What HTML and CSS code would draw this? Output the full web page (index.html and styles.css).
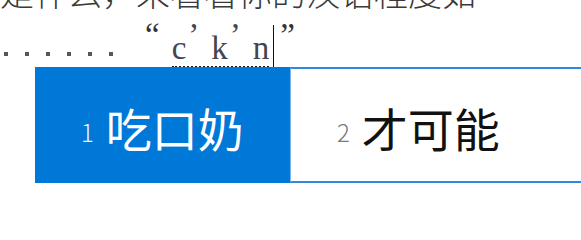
FILE: index.html
```html
<!DOCTYPE html>
<html lang="zh-CN">
<head>
<meta charset="utf-8">
<title>IME</title>
<link rel="stylesheet" href="styles.css">
</head>
<body>
<div class="line1">是什么，来看看你的汉语程度如</div>
<div class="line2"><span class="dots"><i></i><i></i><i></i><i></i><i></i><i></i></span><span class="q lq">“</span><span class="comp">c<span class="ap">’</span>k<span class="ap">’</span>n</span><span class="caret"></span><span class="q rq">”</span></div>
<div class="cands">
  <div class="cand sel"><span class="num">1</span><span class="word">吃口奶</span></div>
  <div class="cand"><span class="num">2</span><span class="word">才可能</span></div>
</div>
</body>
</html>
```
FILE: styles.css
```css
html, body {
  margin: 0;
  padding: 0;
  background: #ffffff;
  overflow: hidden;
}

.line1 {
  margin-top: -25px;
  height: 38px;
  font-family: "Noto Sans CJK SC", sans-serif;
  font-size: 34px;
  line-height: 34px;
  font-weight: 300;
  color: #3a3a3a;
  white-space: nowrap;
}

.line2 {
  box-sizing: border-box;
  height: 54px;
  padding-top: 17px;
  font-family: "Liberation Serif", serif;
  font-size: 33px;
  line-height: 37px;
  color: #45454f;
  white-space: nowrap;
}

.dots {
  display: inline-flex;
  gap: 17px;
  margin-left: 4px;
  margin-right: 32px;
  vertical-align: 3px;
}

.dots i {
  display: block;
  width: 4px;
  height: 4px;
  background: #55575e;
}

.q {
  vertical-align: 13px;
  line-height: 0;
  color: #333333;
}

.lq {
  margin-right: 12px;
}

.rq {
  margin-left: 6px;
}

.comp {
  border-bottom: 2px dotted #1a1a1a;
}

.ap {
  vertical-align: 13px;
  line-height: 0;
  margin: 0 12px 0 2px;
}

.caret {
  display: inline-block;
  width: 1px;
  height: 47px;
  background: #111;
  margin: -20px 0 -4px 4px;
  vertical-align: -9px;
}

.cands {
  display: flex;
  margin-left: 35px;
  height: 116px;
}

.cand {
  box-sizing: border-box;
  display: flex;
  align-items: flex-end;
  gap: 12px;
  padding-left: 46px;
  padding-bottom: 31px;
  font-family: "Noto Sans CJK SC", sans-serif;
  flex: 1;
  border-top: 2px solid #2f88df;
  border-bottom: 2px solid #2f88df;
  border-left: 1px solid #7db6ee;
  color: #111;
}

.cand.sel {
  flex: none;
  width: 255px;
  background: #0078d7;
  border: none;
  padding-bottom: 33px;
  color: #ffffff;
}

.num {
  font-size: 24px;
  line-height: 37px;
  font-weight: 300;
  color: #7a7a7a;
}

.sel .num {
  color: #f2f7fc;
}

.word {
  font-size: 46px;
  line-height: 46px;
}
```
